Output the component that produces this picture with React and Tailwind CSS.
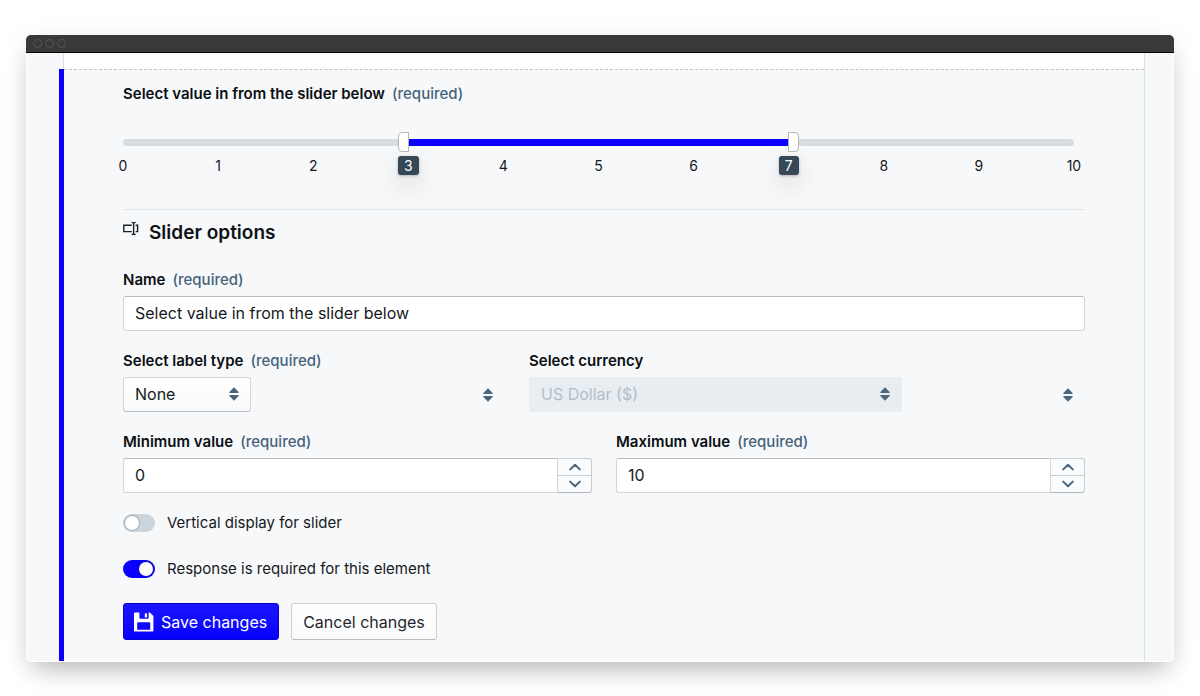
import React, { useState } from "react";

const SortArrows = ({ className = "" }) => (
  <svg
    className={`pointer-events-none w-[10px] h-[14px] fill-[#4b657a] ${className}`}
    viewBox="0 0 10 14"
    aria-hidden="true"
  >
    <path d="M5 0.2 9.6 4.9v1.1H0.4V4.9z" />
    <path d="M5 13.8 9.6 9.1V8H0.4v1.1z" />
  </svg>
);

const Chevron = ({ down }) => (
  <svg
    className="w-3 h-2 fill-none stroke-[#4b657a] stroke-2"
    viewBox="0 0 12 8"
    strokeLinecap="round"
    strokeLinejoin="round"
    aria-hidden="true"
  >
    <path d={down ? "M1.2 1.6 6 6.2l4.8-4.6" : "M1.2 6.4 6 1.8l4.8 4.6"} />
  </svg>
);

const FieldIcon = () => (
  <svg className="w-4 h-[15px] fill-none stroke-[#15202a]" viewBox="0 0 16 15" strokeWidth="1.4" aria-hidden="true">
    <path d="M8.8 4.2H0.8v6.4H8.8" />
    <path d="M12.6 4.2h2v6.4h-2" />
    <path d="M8.6 1.4c1.2 0 2 0.3 2 1.2v9.6c0 0.9-0.8 1.3-2 1.3M12.6 1.4c-1.2 0-2 0.3-2 1.2M12.6 13.5c-1.2 0-2-0.4-2-1.3" />
  </svg>
);

const SaveIcon = () => (
  <svg className="w-5 h-5" viewBox="0 0 20 20" aria-hidden="true">
    <path
      className="fill-white"
      fillRule="evenodd"
      d="M1 .4h4.4v5.4c0 .6.4 1 1 1h7.2c.6 0 1-.4 1-1V.4h1.2L19.4 4v14.6c0 .6-.4 1-1 1H1c-.6 0-1-.4-1-1v-17.2c0-.6.4-1 1-1zM3.2 11v6.8h13V11c0-.5-.3-.8-.8-.8H4c-.5 0-.8.3-.8.8z"
    />
    <path className="fill-white" d="M10.8 1.4h2.2v4h-2.2z" />
  </svg>
);

const Label = ({ htmlFor, required, children }) => (
  <label htmlFor={htmlFor} className="block text-[15px] leading-6 font-semibold text-[#0b0f12]">
    {children}
    {required && <span className="ml-[7px] font-medium text-[#45627a]">(required)</span>}
  </label>
);

const inputClass =
  "w-full h-[35px] px-[11px] pb-[2px] bg-white border border-[#d3d7da] border-t-[#b9bdc0] text-base text-[#15191c] outline-none";

const NumberField = ({ id, label, value, onChange }) => (
  <div>
    <Label htmlFor={id} required>{label}</Label>
    <div className="mt-1 flex">
      <input
        id={id}
        type="text"
        inputMode="numeric"
        value={value}
        onChange={(e) => onChange(Number(e.target.value) || 0)}
        className={`${inputClass} min-w-0 flex-1 rounded-l-[3px]`}
      />
      <div className="flex flex-col w-[34px] border border-l-0 border-[#c9cdd0] border-b-[#b5b9bc] rounded-r-[3px] bg-[#fafbfc]">
        <button
          type="button"
          aria-label={`Increase ${label}`}
          onClick={() => onChange(value + 1)}
          className="flex-1 flex items-center justify-center border-b border-[#c9cdd0]"
        >
          <Chevron />
        </button>
        <button
          type="button"
          aria-label={`Decrease ${label}`}
          onClick={() => onChange(value - 1)}
          className="flex-1 flex items-center justify-center"
        >
          <Chevron down />
        </button>
      </div>
    </div>
  </div>
);

const Toggle = ({ checked, onChange, children }) => (
  <label className="flex items-center gap-3 h-6 text-[15px] text-[#15191c] cursor-pointer">
    <input type="checkbox" role="switch" className="peer sr-only" checked={checked} onChange={(e) => onChange(e.target.checked)} />
    <span className="flex items-center w-8 h-[18px] px-[2px] rounded-full bg-[#cdd5dc] peer-checked:bg-[#0b00ff] peer-checked:justify-end">
      <span className="w-[14px] h-[14px] rounded-full bg-white shadow-[0_0_1px_1px_rgba(40,60,80,0.25)]" />
    </span>
    {children}
  </label>
);

const thumbClass =
  "absolute top-0 h-5 appearance-none bg-transparent pointer-events-none outline-none [&::-webkit-slider-thumb]:pointer-events-auto [&::-webkit-slider-thumb]:appearance-none [&::-webkit-slider-thumb]:w-[11px] [&::-webkit-slider-thumb]:h-5 [&::-webkit-slider-thumb]:bg-white [&::-webkit-slider-thumb]:border [&::-webkit-slider-thumb]:border-[#b4b8bb]";

const RangeSlider = () => {
  const [low, setLow] = useState(3);
  const [high, setHigh] = useState(7);

  return (
    <div className="mr-[11px]">
      <div className="relative h-5 flex items-center">
        <div className="w-full h-[7px] rounded-full bg-[#d7dce0]">
          <div className="h-full bg-[#0b00ff]" style={{ marginLeft: `${low * 10}%`, width: `${(high - low) * 10}%` }} />
        </div>
        <input
          type="range"
          aria-label="Lowest value"
          min="0"
          max="10"
          value={low}
          onChange={(e) => setLow(Math.min(Number(e.target.value), high))}
          className={`${thumbClass} -left-[10px] w-[calc(100%+11px)] [&::-webkit-slider-thumb]:rounded-l-[4px]`}
        />
        <input
          type="range"
          aria-label="Highest value"
          min="0"
          max="10"
          value={high}
          onChange={(e) => setHigh(Math.max(Number(e.target.value), low))}
          className={`${thumbClass} -left-px w-[calc(100%+11px)] [&::-webkit-slider-thumb]:rounded-r-[4px]`}
        />
      </div>
      <div className="mt-1 flex justify-between text-sm leading-[19px] text-[#15191c]">
        {[0, 1, 2, 3, 4, 5, 6, 7, 8, 9, 10].map((n) => (
          <span key={n} className="w-0 flex justify-center">
            {n === low || n === high ? (
              <span className="px-[6px] rounded-[3px] bg-[#364756] text-white shadow-[0_1px_3px_rgba(0,0,0,0.25),0_10px_26px_rgba(0,0,0,0.14)]">
                {n}
              </span>
            ) : (
              n
            )}
          </span>
        ))}
      </div>
    </div>
  );
};

const App = () => {
  const [name, setName] = useState("Select value in from the slider below");
  const [min, setMin] = useState(0);
  const [max, setMax] = useState(10);
  const [vertical, setVertical] = useState(false);
  const [required, setRequired] = useState(true);

  return (
    <div className="min-h-screen bg-white px-[26px] pt-[35px] pb-[34px] font-['Inter','Liberation_Sans',sans-serif]">
      <div className="rounded-[5px] bg-[#f7f8fa] shadow-[0_14px_24px_-8px_rgba(0,0,0,0.25),0_4px_28px_rgba(0,0,0,0.07)]">
        {/* TITLE BAR */}
        <div className="h-[18px] flex items-center gap-[3px] pl-[7px] rounded-t-[5px] bg-[#38393a] border-b border-black">
          <span className="w-[9px] h-[9px] rounded-full border border-[#555657]" />
          <span className="w-[9px] h-[9px] rounded-full border border-[#555657]" />
          <span className="w-[9px] h-[9px] rounded-full border border-[#555657]" />
        </div>

        <div className="pl-8 pr-[28px] border-x border-b border-white rounded-b-[5px]">
          <div className="h-4 ml-[4px] bg-white border-x border-[#dcdfe1]" />

          <form
            className="border-l-[5px] border-l-[#0b00ff] border-r border-r-[#dcdfe1]"
            onSubmit={(e) => e.preventDefault()}
          >
            <div className="border-t border-dashed border-[#bcc7d0] px-[59px] pt-3 pb-[21px]">
              <div className="text-[15px] leading-6 font-semibold text-[#0b0f12]">
                Select value in from the slider below
                <span className="ml-[7px] font-medium text-[#45627a]">(required)</span>
              </div>

              <div className="mt-[26px]">
                <RangeSlider />
              </div>

              <hr className="mt-[34px] border-[#e3e6e8]" />

              {/* OPTIONS */}
              <div className="mt-[9px] flex gap-[10px]">
                <div className="pt-[2px]">
                  <FieldIcon />
                </div>
                <h2 className="text-[19px] leading-7 font-semibold text-[#0f1316]">Slider options</h2>
              </div>

              <div className="mt-[21px] flex flex-col gap-[18px]">
                <div>
                  <Label htmlFor="name" required>Name</Label>
                  <input
                    id="name"
                    type="text"
                    value={name}
                    onChange={(e) => setName(e.target.value)}
                    className={`${inputClass} mt-1 block rounded-[3px]`}
                  />
                </div>

                <div className="grid grid-cols-[382fr_556fr] gap-6">
                  <div>
                    <Label htmlFor="label-type" required>Select label type</Label>
                    <div className="mt-1 flex items-center justify-between pr-3">
                      <div className="relative">
                        <select
                          id="label-type"
                          className="block w-32 h-[35px] px-[11px] pb-[2px] appearance-none rounded-[3px] border border-[#d0d4d7] border-b-[#b9bdc0] bg-linear-to-b from-white to-[#f9fafb] text-base text-[#15191c]"
                        >
                          <option>None</option>
                        </select>
                        <SortArrows className="absolute right-3 top-[10px]" />
                      </div>
                      <SortArrows />
                    </div>
                  </div>
                  <div>
                    <Label htmlFor="currency">Select currency</Label>
                    <div className="mt-1 flex items-center justify-between pr-3">
                      <div className="relative w-[373px]">
                        <select
                          id="currency"
                          disabled
                          className="block w-full h-[35px] px-3 pb-[2px] appearance-none rounded-[3px] bg-[#e8edf1] text-base text-[#b3bec7] opacity-100"
                        >
                          <option>US Dollar ($)</option>
                        </select>
                        <SortArrows className="absolute right-3 top-[10px]" />
                      </div>
                      <SortArrows />
                    </div>
                  </div>
                </div>

                <div className="grid grid-cols-2 gap-6">
                  <NumberField id="min" label="Minimum value" value={min} onChange={setMin} />
                  <NumberField id="max" label="Maximum value" value={max} onChange={setMax} />
                </div>
              </div>

              <div className="mt-[18px] flex flex-col gap-[22px]">
                <Toggle checked={vertical} onChange={setVertical}>Vertical display for slider</Toggle>
                <Toggle checked={required} onChange={setRequired}>Response is required for this element</Toggle>
              </div>

              {/* ACTIONS */}
              <div className="mt-[22px] flex gap-3">
                <button
                  type="submit"
                  className="flex items-center gap-[7px] h-[37px] pl-[10px] pr-[11px] rounded-[3px] border border-[#0a00c8] bg-linear-to-b from-[#1b14ff] to-[#0500ff] text-base text-white"
                >
                  <SaveIcon />
                  Save changes
                </button>
                <button
                  type="button"
                  className="h-[37px] px-[11px] rounded-[3px] border border-[#cdd1d4] border-b-[#babec1] bg-linear-to-b from-white to-[#f9fafb] text-base text-[#23282c]"
                >
                  Cancel changes
                </button>
              </div>
            </div>
          </form>
        </div>
      </div>
    </div>
  );
};

export default App;
